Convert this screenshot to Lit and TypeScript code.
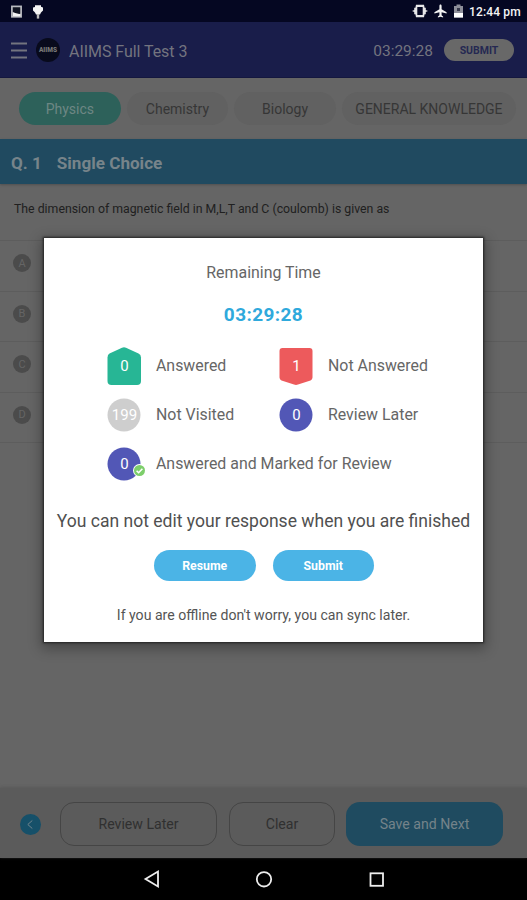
import { LitElement, html, css, svg } from "lit";
import { customElement } from "lit/decorators.js";

const check = svg`<circle cx="6.5" cy="6.5" r="6.5" fill="#fff"/><circle cx="6.5" cy="6.5" r="5.5" fill="#7dce6b"/><path d="M3.6 6.7l2 2 3.8-4" fill="none" stroke="#fff" stroke-width="1.6"/>`;

@customElement("status-bar")
class StatusBar extends LitElement {
  static styles = css`
    :host { display: flex; align-items: center; height: 22px; background: #050722; color: #f4f4f4; padding: 0 6px 0 11px; }
    svg { display: block; }
    .spacer { flex: 1; }
    .bulb { margin-left: 10px; }
    .plane { margin-left: 6px; }
    .battery { margin-left: 7px; }
    .clock { margin: 2px 0 0 6px; font-size: 12px; font-weight: 500; line-height: 18px; width: 52px; white-space: nowrap; letter-spacing: 0.15px; }
  `;
  render() {
    return html`
      <svg width="11" height="14" viewBox="0 0 11 14"><rect x="0.9" y="2.4" width="9.2" height="10.4" fill="#101321" stroke="#b9bac0" stroke-width="1.7"/><path d="M1.7 8l2.5 1 2 .6 2 .4 1.4-.2v2.400H1.7z" fill="#f4f4f4"/></svg>
      <svg class="bulb" width="12" height="15" viewBox="0 0 12 15"><path d="M3 1.2h6v1.6l2 .7v3L9 8.6l-1 2H4l-1-2-2-2v-3l2-.7z" fill="#f4f4f4"/><path d="M6 10v4.6" stroke="#bbb" stroke-width="2.4"/></svg>
      <div class="spacer"></div>
      <svg width="16" height="14" viewBox="0 0 16 14"><path d="M4 0.8h8l.6 3h1.2v2.2L16 7l-2.2 1v2.2h-1.2l-.6 3H4l-.6-3H2.2V8L0 7l2.2-1V3.800h1.200z" fill="#e6e6e8"/><rect x="5.300" y="3" width="5.400" height="8" fill="#050722"/></svg>
      <svg class="plane" width="13" height="14" viewBox="0 0 13 14"><path d="M6.500.5c.8 0 1.100.7 1.100 1.500v3.300l5 3v1.300l-5-1.400v3l1.500 1.300v1l-2.600-.7-2.600.7v-1l1.500-1.300v-3l-5 1.400V8.300l5-3V2C5.400 1.200 5.700.5 6.500.5z" fill="#f2f2f2"/></svg>
      <svg class="battery" width="9" height="14" viewBox="0 0 9 14"><path d="M2.500.5h4V2H9v11.500H0V2h2.500z" fill="#8d8e99"/><path d="M0 9h9v4.500H0z" fill="#fff"/><path d="M3 4h3v3H3z" fill="#36384a"/></svg>
      <span class="clock">12:44 pm</span>
    `;
  }
}

@customElement("test-page")
class TestPage extends LitElement {
  static styles = css`
    :host { display: flex; flex-direction: column; flex: 1; background: #656565; }
    svg { display: block; }
    header { display: flex; align-items: center; height: 56px; box-sizing: border-box; padding: 0 13px 0 11px; background: #191d4a; border-bottom: 1px solid #14173f; color: #73747f; }
    .logo { display: flex; align-items: center; justify-content: center; width: 24px; height: 24px; border-radius: 50%; background: #080a1c; margin-left: 9px; font-size: 6.5px; font-weight: 900; color: #777; }
    .title { margin-left: 9px; font-size: 16px; flex: 1; letter-spacing: -0.05px; padding-top: 3px; }
    .timer { font-size: 15.5px; margin-right: 11px; padding-top: 3px; }
    .send { display: flex; align-items: center; justify-content: center; width: 70px; height: 22px; border-radius: 11px; background: #686868; color: #252852; font-size: 10.5px; font-weight: 700; margin-top: 1px; }
    .tabs { display: flex; gap: 6px; height: 61px; box-sizing: border-box; padding: 14px 11px 0 19px; }
    .tab { display: flex; align-items: center; justify-content: center; flex: 101 1 0; height: 33px; border-radius: 17px; background: #616161; color: #363636; font-size: 14px; white-space: nowrap; padding-top: 1px; box-sizing: border-box; }
    .tab.on { background: #2d615a; color: #6d8784; }
    .tab.wide { flex: 173 1 0; }
    .question { display: flex; align-items: center; gap: 15px; height: 45px; padding: 2px 11px 0; box-sizing: border-box; background: #204a60; color: #77848a; font-size: 17.1px; font-weight: 700; box-shadow: 0 1px 2px #505050; }
    .prompt { height: 56px; box-sizing: border-box; padding: 17px 14px 0; font-size: 12.3px; line-height: 16px; color: #202020; }
    .option { display: flex; align-items: center; height: 50.5px; box-sizing: border-box; padding: 0 13px; border-top: 1px solid #5d5d5d; }
    .letter { display: flex; align-items: center; justify-content: center; width: 18px; height: 18px; border-radius: 50%; background: #4b4b4b; color: #656565; font-size: 11px; margin-bottom: 5px; }
    .end { flex: 1; border-top: 1px solid #5d5d5d; }
    footer { display: flex; align-items: center; height: 70px; box-sizing: border-box; padding: 2px 24px 0 20px; background: #5b5b5b; box-shadow: 0 -1px 3px #595959; }
    .btn { display: flex; align-items: center; justify-content: center; height: 44px; box-sizing: border-box; border: 1px solid #454545; border-radius: 14px; font-size: 14.1px; color: #303030; }
    .later { width: 157px; margin-left: 19px; }
    .clear { width: 106px; margin: 0 11px 0 12px; }
    .save { flex: 1; border: 0; background: #1f4b60; color: #74838a; }
  `;
  render() {
    return html`
      <header>
        <svg width="16" height="18" viewBox="0 0 16 18"><path d="M0 2.500h16M0 9.500h16M0 16.500h16" stroke="#73747f" stroke-width="2"/></svg>
        <span class="logo">AIIMS</span>
        <span class="title">AIIMS Full Test 3</span>
        <span class="timer">03:29:28</span>
        <span class="send">SUBMIT</span>
      </header>
      <nav class="tabs">
        <span class="tab on">Physics</span><span class="tab">Chemistry</span><span class="tab">Biology</span><span class="tab wide">GENERAL KNOWLEDGE</span>
      </nav>
      <div class="question"><span>Q. 1</span><span>Single Choice</span></div>
      <div class="prompt">The dimension of magnetic field in M,L,T and C (coulomb) is given as</div>
      ${["A", "B", "C", "D"].map((l) => html`<div class="option"><span class="letter">${l}</span></div>`)}
      <div class="end"></div>
      <footer>
        <svg width="21" height="21" viewBox="0 0 21 21"><circle cx="10.5" cy="10.5" r="10.5" fill="#165069"/><path d="M12.300 6.500l-4.500 4 4.500 4" fill="none" stroke="#71858e"/></svg>
        <span class="btn later">Review Later</span>
        <span class="btn clear">Clear</span>
        <span class="btn save">Save and Next</span>
      </footer>
    `;
  }
}

@customElement("summary-dialog")
class SummaryDialog extends LitElement {
  static styles = css`
    :host { display: flex; flex-direction: column; align-items: center; box-sizing: border-box; background: #fff; color: #666; box-shadow: 0 0 2px 1px #222, 0 4px 12px 3px rgba(0, 0, 0, 0.3); }
    svg { display: block; }
    .heading { margin-top: 25px; font-size: 15.9px; line-height: 20px; }
    .time { margin-top: 21px; font-size: 19px; line-height: 22px; font-weight: 700; letter-spacing: 0.4px; color: #2fa9dc; }
    .grid { display: grid; grid-template-columns: 172px 1fr; grid-auto-rows: 49px; align-self: stretch; margin: 15px 0 0 63px; }
    .cell { display: flex; align-items: center; gap: 14px; font-size: 15.9px; white-space: nowrap; }
    .cell.full { grid-column: 1 / 3; }
    .mark { display: grid; place-items: center; width: 35px; height: 38px; position: relative; color: #fff; font-size: 15px; }
    .mark > * { grid-area: 1 / 1; }
    .mark span { z-index: 1; }
    .tick { position: absolute; right: -4px; bottom: 6px; }
    .warn { margin-top: 21px; font-size: 17.55px; line-height: 24px; color: #505050; white-space: nowrap; }
    .actions { display: flex; gap: 17px; margin: 17px 0 0 1px; }
    .btn { display: flex; align-items: center; justify-content: center; width: 101.500px; height: 31px; border-radius: 16px; background: #4bb4e6; color: #fff; font-size: 12.3px; font-weight: 700; }
    .note { margin-top: 25px; font-size: 14.1px; line-height: 18px; color: #555; white-space: nowrap; }
  `;
  render() {
    const disc = (fill: string) => html`<svg width="35" height="38" viewBox="0 0 35 38"><circle cx="17" cy="19" r="16.500" fill=${fill}/></svg>`;
    const cell = (shape: unknown, count: string, label: string, badge: unknown = "", full = false) => html`
      <div class="cell ${full ? "full" : ""}"><div class="mark">${shape}<span>${count}</span>${badge}</div><span>${label}</span></div>`;
    return html`
      <div class="heading">Remaining Time</div>
      <div class="time">03:29:28</div>
      <div class="grid">
        ${cell(html`<svg width="35" height="38" viewBox="0 0 35 38"><path d="M2.500 6.500L15 .8q2-.9 4 0L31.500 6.500Q34 7.700 34 10.500V34q0 4-4 4H4.500q-4 0-4-4V10.500q0-2.800 2-4z" fill="#27b695"/></svg>`, "0", "Answered")}
        ${cell(html`<svg width="35" height="38" viewBox="0 0 35 38"><path d="M3.500 1H30.500Q33.500 1 33.500 4V30.500q0 2-2 2.900L19 37.500q-2 .8-4 0L2.500 33.400q-2-.9-2-2.900V4q0-3 3-3z" fill="#ed5a5c"/></svg>`, "1", "Not Answered")}
        ${cell(disc("#cecece"), "199", "Not Visited")}
        ${cell(disc("#5257b6"), "0", "Review Later")}
        ${cell(disc("#5257b6"), "0", "Answered and Marked for Review", html`<svg class="tick" width="13" height="13" viewBox="0 0 13 13">${check}</svg>`, true)}
      </div>
      <div class="warn">You can not edit your response when you are finished</div>
      <div class="actions"><span class="btn">Resume</span><span class="btn">Submit</span></div>
      <div class="note">If you are offline don't worry, you can sync later.</div>
    `;
  }
}

@customElement("app-root")
class AppRoot extends LitElement {
  static styles = css`
    :host { display: flex; flex-direction: column; position: relative; width: 527px; height: 900px; overflow: hidden; background: #000; font-family: Roboto, "Liberation Sans", sans-serif; }
    summary-dialog { position: absolute; left: 44px; top: 238px; width: 439px; height: 404px; }
    .keys { display: flex; align-items: center; justify-content: center; height: 42px; }
    .keys svg { display: block; }
  `;
  render() {
    return html`
      <status-bar></status-bar>
      <test-page></test-page>
      <div class="keys">
        <svg width="242" height="20" viewBox="0 0 242 20" fill="none" stroke="#eee" stroke-width="1.800"><path d="M15 2.500v15L2.500 10z"/><circle cx="121" cy="10.300" r="7.200"/><rect x="227.500" y="4.300" width="12.500" height="12.500"/></svg>
      </div>
      <summary-dialog></summary-dialog>
    `;
  }
}
